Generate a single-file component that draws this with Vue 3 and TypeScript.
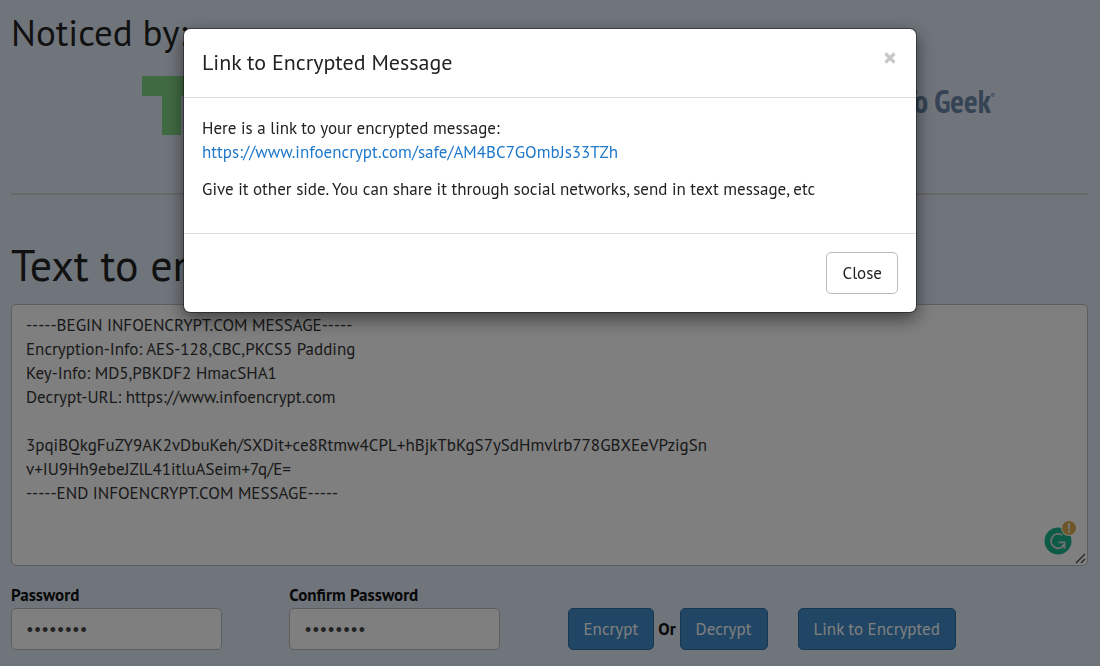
<script setup lang="ts">
import { ref } from 'vue'

const open = ref(true)
const password = ref('password')
const confirmation = ref('password')
const shareUrl = 'https://www.infoencrypt.com/safe/AM4BC7GOmbJs33TZh'
const message = ref(
  [
    '-----BEGIN INFOENCRYPT.COM MESSAGE-----',
    'Encryption-Info: AES-128,CBC,PKCS5 Padding',
    'Key-Info: MD5,PBKDF2 HmacSHA1',
    'Decrypt-URL: https://www.infoencrypt.com',
    '',
    '3pqiBQkgFuZY9AK2vDbuKeh/SXDit+ce8Rtmw4CPL+hBjkTbKgS7ySdHmvlrb778GBXEeVPzigSn',
    'v+IU9Hh9ebeJZlL41itluASeim+7q/E=',
    '-----END INFOENCRYPT.COM MESSAGE-----',
  ].join('\n'),
)
</script>

<template>
  <div class="page">
    <main class="content">
      <section class="noticed">
        <h2>Noticed by:</h2>
        <div class="logos">
          <svg class="tc" width="120" height="60" viewBox="0 0 120 60" aria-hidden="true">
            <path d="M0 0H59V20H39V59H20V20H0Z" />
            <path d="M61 0H120V20H81V39H120V59H61Z" />
          </svg>
          <div class="geek">How-To Geek<sup>®</sup></div>
        </div>
      </section>
      <hr />
      <h1><label for="message">Text to encrypt</label></h1>
      <div class="editor">
        <textarea id="message" v-model="message" spellcheck="false"></textarea>
        <svg class="checker" width="34" height="36" viewBox="0 0 34 36" aria-hidden="true">
          <circle cx="15" cy="21" r="13.5" fill="#1bb58c" />
          <path d="M19.5 15.2A7.2 7.2 0 1 0 21 25.4M15.5 22.4H21.6V28.6M21.6 24L18.6 27" fill="none" stroke="#ddd" stroke-width="1.8" />
          <circle cx="26" cy="8" r="8" fill="#fff" />
          <circle cx="26" cy="8" r="7" fill="#dbae50" />
          <path d="M26 3.5V9M26 10.6V12.8" stroke="#eee" stroke-width="2" />
        </svg>
        <svg class="grip" width="12" height="12" viewBox="0 0 12 12" aria-hidden="true">
          <path d="M1 10L10 1M6 10L10 6" fill="none" stroke="#444" stroke-width="1.3" />
        </svg>
      </div>
      <form class="controls" @submit.prevent>
        <div class="field">
          <label for="password">Password</label>
          <input id="password" v-model="password" type="password" />
        </div>
        <div class="field">
          <label for="confirm">Confirm Password</label>
          <input id="confirm" v-model="confirmation" type="password" />
        </div>
        <div class="actions">
          <button type="button" class="primary">Encrypt</button>
          <strong>Or</strong>
          <button type="button" class="primary">Decrypt</button>
          <button type="button" class="primary share" @click="open = true">Link to Encrypted</button>
        </div>
      </form>
    </main>

    <div v-if="open" class="backdrop">
      <div class="modal" role="dialog" aria-modal="true" aria-labelledby="modal-title">
        <header>
          <h4 id="modal-title">Link to Encrypted Message</h4>
          <button type="button" class="dismiss" aria-label="Close dialog" @click="open = false">
            <svg width="12" height="12" viewBox="0 0 12 12" aria-hidden="true">
              <path d="M1.5 1.5L10.5 10.5M10.5 1.5L1.5 10.5" stroke="#c8c8c8" stroke-width="3.2" />
            </svg>
          </button>
        </header>
        <div class="body">
          <p>Here is a link to your encrypted message:<br /><a :href="shareUrl">{{ shareUrl }}</a></p>
          <p>Give it other side. You can share it through social networks, send in text message, etc</p>
        </div>
        <footer>
          <button type="button" class="plain" @click="open = false">Close</button>
        </footer>
      </div>
    </div>
  </div>
</template>

<style>
body {
  margin: 0;
  background: #e1ebf8;
}
</style>

<style scoped>
* {
  box-sizing: border-box;
}
.page {
  font: 17px/24px "PT Sans", "Noto Sans", sans-serif;
  color: #222;
}
.content {
  padding: 8px 12px 16px 11px;
}
h1,
h2,
h4 {
  margin: 0;
  font-weight: 400;
}
h2 {
  font-size: 37px;
  line-height: 48px;
}
.logos {
  display: flex;
  justify-content: space-between;
  align-items: flex-start;
  height: 60px;
  padding: 0 93px 0 131px;
  margin-top: 20px;
}
.tc {
  fill: #80d685;
}
.geek {
  padding-top: 3px;
  font: bold 32px/44px "PT Sans Narrow", "Open Sans Condensed", "Roboto Condensed", "DejaVu Sans Condensed", sans-serif;
  color: #6a87ab;
}
.geek sup {
  font-size: 7px;
  line-height: 7px;
  vertical-align: 14px;
}
hr {
  margin: 57px 0 0;
  border: 0;
  border-top: 2px solid #d3d3d3;
}
h1 {
  margin-top: 40px;
  font-size: 44px;
  line-height: 60px;
}
.editor {
  position: relative;
  margin-top: 9px;
}
textarea {
  display: block;
  width: 100%;
  height: 262px;
  padding: 8px 14px;
  border: 1px solid #bbb;
  border-radius: 5px;
  background: #fff;
  color: #333;
  font: inherit;
  resize: none;
}
.checker {
  position: absolute;
  right: 11px;
  bottom: 10px;
}
.grip {
  position: absolute;
  right: 1px;
  bottom: 1px;
}
.controls {
  display: grid;
  grid-template-columns: repeat(4, 1fr);
  gap: 36px;
  align-items: end;
  margin-top: 17px;
}
.field label {
  display: block;
  font-weight: 700;
  line-height: 25px;
  color: #111;
}
.field input {
  display: block;
  width: 87%;
  height: 42px;
  padding: 0 14px;
  border: 1px solid #bbb;
  border-radius: 5px;
  background: #fff;
  color: #444;
  font: inherit;
}
.actions {
  grid-column: span 2;
  display: flex;
  align-items: center;
  gap: 4px;
}
.actions strong {
  color: #111;
}
button {
  font: inherit;
  white-space: nowrap;
  cursor: pointer;
}
.primary {
  height: 42px;
  padding: 0 15px;
  border: 1px solid #2e6da4;
  border-radius: 5px;
  background: #428bca;
  color: #fff;
}
.share {
  margin-left: 26px;
}
.backdrop {
  position: fixed;
  inset: 0;
  padding: 28px 16px;
  background: rgba(0, 0, 0, 0.5);
}
.modal {
  width: 100%;
  max-width: 734px;
  margin: 0 auto;
  border: 1px solid rgba(0, 0, 0, 0.4);
  border-radius: 7px;
  background: #fff;
  background-clip: padding-box;
  box-shadow: 0 6px 18px rgba(0, 0, 0, 0.5);
}
header {
  display: flex;
  justify-content: space-between;
  align-items: flex-start;
  padding: 18px 18px 19px;
  border-bottom: 1px solid #ddd;
}
h4 {
  font-size: 22px;
  line-height: 31px;
}
.dismiss {
  display: flex;
  padding: 5px 2px;
  border: 0;
  background: none;
}
.body {
  padding: 18px 18px 32px;
}
.body p {
  margin: 0 0 13px;
}
.body p:last-child {
  margin: 0;
}
a {
  color: #1e78cb;
  text-decoration: none;
}
footer {
  display: flex;
  justify-content: flex-end;
  padding: 18px;
  border-top: 1px solid #ddd;
}
.plain {
  height: 42px;
  padding: 0 15px;
  border: 1px solid #bbb;
  border-radius: 5px;
  background: #fff;
  color: #222;
}
</style>
